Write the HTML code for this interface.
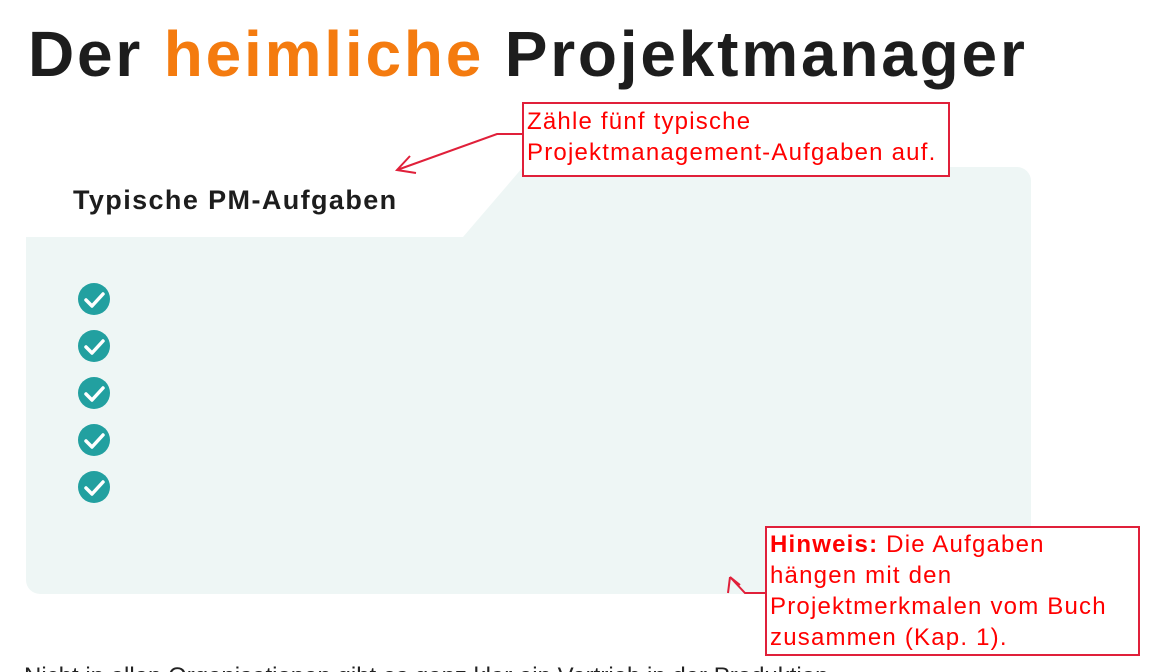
<!DOCTYPE html>
<html><head><meta charset="utf-8"><style>
html,body{margin:0;padding:0;width:1162px;height:672px;overflow:hidden;background:#fff;position:relative;font-family:"Liberation Sans",sans-serif}
h1{position:absolute;left:28px;top:12px;margin:0;font-size:64px;font-weight:bold;color:#1d1d1d;letter-spacing:2.8px;white-space:nowrap;line-height:84px}
h1 span{color:#f47b0f}
.panel{position:absolute;left:26px;top:167px;width:1005px;height:427px;background:#eef6f5;border-radius:0 14px 14px 14px}
.h2{position:absolute;left:73px;top:185px;font-size:27px;font-weight:bold;color:#1d1d1d;letter-spacing:1.4px}
.chk{position:absolute;left:78px;width:32px;height:32px;border-radius:50%;background:#22a0a0}
.box{position:absolute;border:2px solid #e0203a;background:#fff;color:#f00;font-size:24px;line-height:31px;padding:0 3px;box-sizing:border-box;letter-spacing:1.2px;white-space:nowrap}
.para{position:absolute;left:24px;top:663px;font-size:24px;color:#222;white-space:nowrap}
</style></head><body>
<h1>Der <span>heimliche</span> Projektmanager</h1>
<div class="panel"></div>
<svg style="position:absolute;left:0;top:0" width="1162" height="672">
<path d="M26 167 L523 167 L463 237 L26 237 Z" fill="#fff"/>
<g fill="none" stroke="#e0203a" stroke-width="2">
<path d="M522 134 L497 134 L397 170"/>
<path d="M410 156 L397 170 L416 173"/>
<path d="M765 593 L745 593 L730 577"/>
<path d="M730 577 L728 593 M730 577 L740 585"/>
</g>
</svg>
<div class="h2">Typische PM-Aufgaben</div>
<div class="chk" style="top:283px"></div>
<div class="chk" style="top:330px"></div>
<div class="chk" style="top:377px"></div>
<div class="chk" style="top:424px"></div>
<div class="chk" style="top:471px"></div>
<svg style="position:absolute;left:0;top:0" width="1162" height="672">
<g stroke="#fff" stroke-width="3.5" fill="none" stroke-linecap="round" stroke-linejoin="round">
<path d="M86 300 L92 306 L103 294"/>
<path d="M86 347 L92 353 L103 341"/>
<path d="M86 394 L92 400 L103 388"/>
<path d="M86 441 L92 447 L103 435"/>
<path d="M86 488 L92 494 L103 482"/>
</g></svg>
<div class="box" style="left:522px;top:102px;width:428px;height:75px;padding-top:2px">Zähle fünf typische<br>Projektmanagement-Aufgaben auf.</div>
<div class="box" style="left:765px;top:526px;width:375px;height:130px;padding-top:1px"><b>Hinweis:</b> Die Aufgaben<br>hängen mit den<br>Projektmerkmalen vom Buch<br>zusammen (Kap. 1).</div>
<div class="para">Nicht in allen Organisationen gibt es ganz klar ein Vertrieb in der Produktion</div>
</body></html>
